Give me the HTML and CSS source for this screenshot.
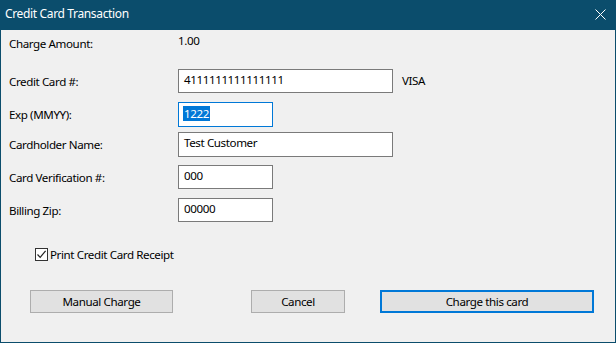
FILE: index.html
```html
<!DOCTYPE html>
<html>
<head>
<meta charset="utf-8">
<link rel="stylesheet" href="styles.css">
</head>
<body>
<div class="window">
  <div class="titlebar">
    <span class="title">Credit Card Transaction</span>
    <svg class="close" width="11" height="11" viewBox="0 0 11 11"><path d="M0.5 0.5 L10.5 10.5 M10.5 0.5 L0.5 10.5" stroke="#fff" stroke-width="1" fill="none"/></svg>
  </div>
  <div class="content">
    <div class="row r-amount">
      <span class="label">Charge Amount:</span>
      <span class="value">1.00</span>
    </div>
    <div class="row r-cc">
      <span class="label">Credit Card #:</span>
      <div class="input wide">4111111111111111</div>
      <span class="brand">VISA</span>
    </div>
    <div class="row r-exp">
      <span class="label">Exp (MMYY):</span>
      <div class="input narrow focused"><span class="sel">1222</span></div>
    </div>
    <div class="row r-name">
      <span class="label">Cardholder Name:</span>
      <div class="input wide">Test Customer</div>
    </div>
    <div class="row r-cv">
      <span class="label">Card Verification #:</span>
      <div class="input narrow">000</div>
    </div>
    <div class="row r-zip">
      <span class="label">Billing Zip:</span>
      <div class="input narrow">00000</div>
    </div>
    <div class="check-row">
      <span class="checkbox">
        <svg width="11" height="11" viewBox="0 0 11 11"><path d="M1.5 5.5 L4.2 8.3 L9.6 1.8" stroke="#222" stroke-width="1.2" fill="none"/></svg>
      </span>
      <span class="check-label">Print Credit Card Receipt</span>
    </div>
    <div class="buttons">
      <div class="btn b-manual">Manual Charge</div>
      <div class="btn b-cancel">Cancel</div>
      <div class="btn b-charge default">Charge this card</div>
    </div>
  </div>
</div>
</body>
</html>
```
FILE: styles.css
```css
html, body {
  margin: 0;
  padding: 0;
  background: #f0f0f0;
}
body {
  font-family: "Noto Sans", "DejaVu Sans", sans-serif;
  font-size: 11.6px;
  letter-spacing: -0.4px;
  color: #000;
}
.window {
  width: 616px;
  height: 343px;
  box-sizing: border-box;
  border: 1px solid #0b4d6c;
  border-top: none;
  background: #f0f0f0;
  display: flex;
  flex-direction: column;
}
.titlebar {
  height: 30px;
  margin: 0 -1px;
  background: #0b4d6c;
  color: #fff;
  display: flex;
  align-items: center;
  padding: 0 10px 0 5px;
  flex-shrink: 0;
}
.title {
  flex: 1;
  font-size: 12px;
  letter-spacing: -0.35px;
  position: relative;
  top: -2px;
}
.close {
  display: block;
  margin-top: -1px;
}
.content {
  padding: 0 0 0 8px;
  position: relative;
}
.row {
  display: flex;
  align-items: center;
}
.label {
  width: 169px;
  flex-shrink: 0;
}
.value {
  position: relative;
  top: -3px;
}
.r-amount { height: 17px; margin-top: 5px; }
.r-cc { margin-top: 17px; }
.r-exp { margin-top: 9px; }
.r-name { margin-top: 5px; }
.r-cv { margin-top: 8px; }
.r-zip { margin-top: 9px; }
.input {
  box-sizing: border-box;
  height: 24px;
  border: 1px solid #7a7a7a;
  background: #fff;
  padding: 2px 0 0 5px;
  line-height: 16px;
  white-space: nowrap;
}
.wide { width: 215px; }
.narrow { width: 95px; }
.r-exp .input, .r-name .input { height: 25px; }
.focused {
  border-color: #0078d7;
  padding-left: 4px;
}
.sel {
  background: #0078d7;
  color: #fff;
  display: inline-block;
  padding: 0 1px;
  line-height: 15px;
  margin-top: 1px;
}
.brand {
  margin-left: 9px;
  position: relative;
  top: -1px;
}
.check-row {
  display: flex;
  align-items: center;
  margin-top: 25px;
  margin-left: 26px;
  height: 14px;
}
.checkbox {
  box-sizing: border-box;
  width: 13px;
  height: 13px;
  border: 1px solid #333;
  background: #fff;
  display: flex;
  align-items: center;
  justify-content: center;
}
.checkbox svg { display: block; }
.check-label {
  margin-left: 2px;
}
.buttons {
  display: flex;
  margin-top: 29px;
  margin-left: 21px;
}
.btn {
  box-sizing: border-box;
  height: 23px;
  background: #e1e1e1;
  border: 1px solid #adadad;
  display: flex;
  align-items: center;
  justify-content: center;
}
.b-manual { width: 143px; }
.b-cancel { width: 94px; margin-left: 78px; }
.b-charge { width: 214px; margin-left: 35px; }
.default {
  border: 2px solid #0078d7;
}
```
